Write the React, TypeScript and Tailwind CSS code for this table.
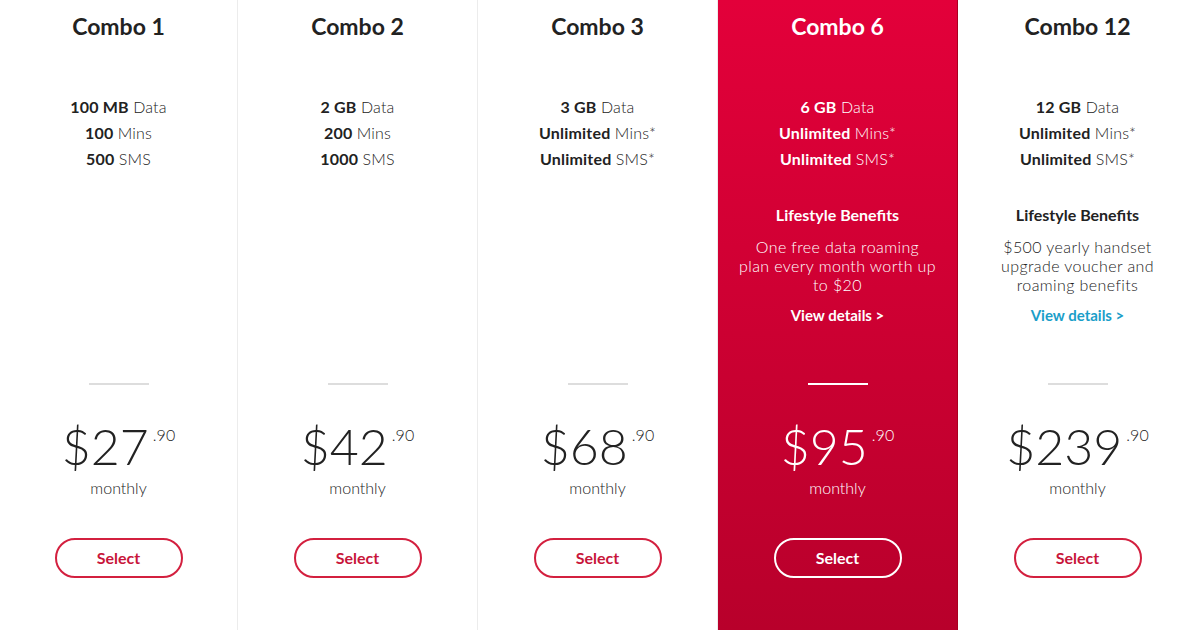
type Plan = {
  name: string;
  data: string;
  mins: string;
  sms: string;
  benefit?: string[];
  price: string;
  featured?: boolean;
};

const plans: Plan[] = [
  { name: "Combo 1", data: "100 MB", mins: "100", sms: "500", price: "$27" },
  { name: "Combo 2", data: "2 GB", mins: "200", sms: "1000", price: "$42" },
  { name: "Combo 3", data: "3 GB", mins: "Unlimited", sms: "Unlimited", price: "$68" },
  {
    name: "Combo 6",
    data: "6 GB",
    mins: "Unlimited",
    sms: "Unlimited",
    benefit: ["One free data roaming", "plan every month worth up", "to $20"],
    price: "$95",
    featured: true,
  },
  {
    name: "Combo 12",
    data: "12 GB",
    mins: "Unlimited",
    sms: "Unlimited",
    benefit: ["$500 yearly handset", "upgrade voucher and", "roaming benefits"],
    price: "$239",
  },
];

function PlanColumn({ plan }: { plan: Plan }) {
  const unlimited = plan.mins === "Unlimited";
  const f = plan.featured;
  return (
    <div
      className={
        f
          ? "flex flex-col items-center h-[630px] bg-gradient-to-b from-[#e3003a] to-[#b8002b] border-r border-[#a8001f] text-white"
          : "flex flex-col items-center h-[630px] bg-white border-r border-[#ececec] text-[#222]"
      }
    >
      <div className="h-[370px] w-full flex flex-col items-center">
        <h2 className="mt-[12px] text-[23px] leading-[28px] font-bold">{plan.name}</h2>
        <div className="mt-[54px] text-[16px] leading-[26px] text-center tracking-[0.2px]">
          <div>
            <span className="font-bold">{plan.data}</span> <span className="font-light">Data</span>
          </div>
          <div>
            <span className="font-bold">{plan.mins}</span>{" "}
            <span className="font-light">Mins{unlimited ? "*" : ""}</span>
          </div>
          <div>
            <span className="font-bold">{plan.sms}</span>{" "}
            <span className="font-light">SMS{unlimited ? "*" : ""}</span>
          </div>
        </div>
        {plan.benefit && (
          <>
            <div className="mt-[32px] text-[16px] leading-[22px] font-bold">Lifestyle Benefits</div>
            <p className="mt-[11px] text-[16px] leading-[19px] font-light text-center tracking-[0.4px]">
              {plan.benefit.map((line) => (
                <span key={line} className="block">
                  {line}
                </span>
              ))}
            </p>
            <a
              className={
                f
                  ? "mt-[11px] text-[15px] leading-[20px] font-bold text-white"
                  : "mt-[11px] text-[15px] leading-[20px] font-bold text-[#1a9ec9]"
              }
            >
              View details &gt;
            </a>
          </>
        )}
      </div>
      <div className={f ? "mt-[13px] h-[2px] w-[60px] bg-white" : "mt-[13px] h-[2px] w-[60px] bg-[#dddddd]"} />
      <div className="mt-[36px] flex items-start">
        <span className="text-[50px] leading-[50px] font-light">{plan.price}</span>
        <span className="ml-[4px] mt-[6px] text-[16px] leading-[16px] font-light">.90</span>
      </div>
      <div className="mt-[7px] text-[16px] leading-[20px] font-light">monthly</div>
      <button
        className={
          f
            ? "mt-[40px] h-[40px] w-[128px] rounded-full border-2 border-white text-[16px] font-bold text-white"
            : "mt-[40px] h-[40px] w-[128px] rounded-full border-2 border-[#d3203f] text-[16px] font-bold text-[#c8153a]"
        }
      >
        Select
      </button>
    </div>
  );
}

export default function App() {
  return (
    <div
      className="w-[1193px] h-[630px] overflow-hidden bg-white grid grid-cols-[238px_240px_240px_240px_240px]"
      style={{ fontFamily: "Lato, 'Open Sans', sans-serif" }}
    >
      {plans.map((p) => (
        <PlanColumn key={p.name} plan={p} />
      ))}
    </div>
  );
}
